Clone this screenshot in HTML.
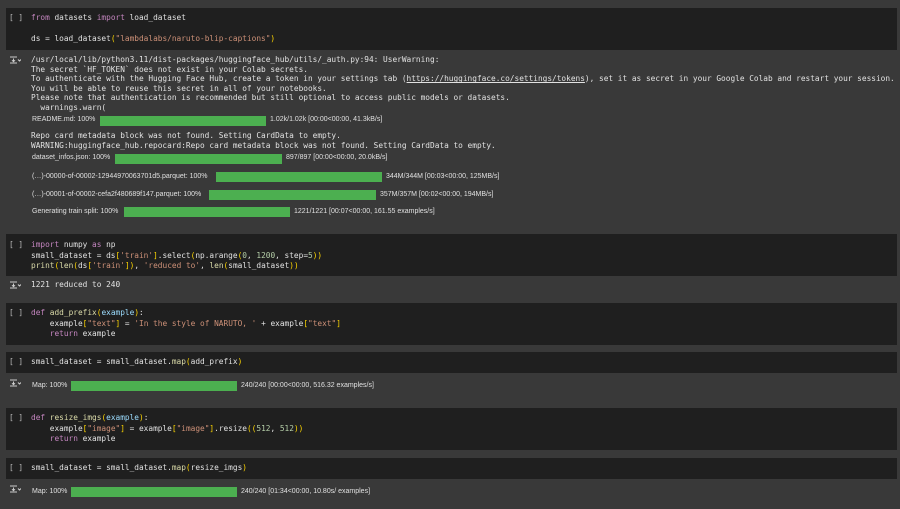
<!DOCTYPE html>
<html><head><style>
body{margin:0;width:900px;height:509px;background:#393939;overflow:hidden;position:relative;font-family:"DejaVu Sans Mono","Liberation Mono",monospace;font-size:7.8px;color:#e2e2e2}
.cell{position:absolute;left:6px;width:891px;background:#1f1f1f}
.l{position:absolute;left:31px;white-space:pre;line-height:10px;height:10px}
.br{position:absolute;left:9px;white-space:pre;line-height:10px;color:#bbb}
.ic{position:absolute;left:10px;width:11px;height:8px}
.p{position:absolute;font-family:"Liberation Sans",sans-serif;font-size:7px;color:#e0e0e0;white-space:pre;line-height:10px}
.bar{position:absolute;background:#4caf50;height:10px}
.k{color:#c586c0}.s{color:#ce9178}.f{color:#dcdcaa}.y{color:#ffd700}.v{color:#9cdcfe}.n{color:#b5cea8}
a{color:#e2e2e2;text-decoration:underline}
</style></head><body>
<svg width="0" height="0" style="position:absolute"><defs><g id="ic"><path d="M0 1h7M0 7h7M3.5 2.5v3M2 4.2l1.5 1.5 1.5-1.5M8 3.5l1.5 1.5 1.5-1.5" stroke="#ccc" stroke-width="1" fill="none"/></g></defs></svg>

<div class="cell" style="top:8px;height:42px"></div>
<div class="br" style="top:13px">[ ]</div>
<div class="l" style="top:13px"><span class="k">from</span> datasets <span class="k">import</span> load_dataset</div>
<div class="l" style="top:34px">ds = load_dataset<span class="y">(</span><span class="s">"lambdalabs/naruto-blip-captions"</span><span class="y">)</span></div>

<svg class="ic" style="top:56px"><use href="#ic"/></svg>
<div class="l" style="top:55px">/usr/local/lib/python3.11/dist-packages/huggingface_hub/utils/_auth.py:94: UserWarning:</div>
<div class="l" style="top:64.6px">The secret `HF_TOKEN` does not exist in your Colab secrets.</div>
<div class="l" style="top:74.2px">To authenticate with the Hugging Face Hub, create a token in your settings tab (<a>https://huggingface.co/settings/tokens</a>), set it as secret in your Google Colab and restart your session.</div>
<div class="l" style="top:83.8px">You will be able to reuse this secret in all of your notebooks.</div>
<div class="l" style="top:93.4px">Please note that authentication is recommended but still optional to access public models or datasets.</div>
<div class="l" style="top:103px">  warnings.warn(</div>
<div class="p" style="left:32px;top:115px">README.md: 100%</div><div class="bar" style="left:100px;top:116px;width:166px"></div><div class="p" style="left:270px;top:115px">1.02k/1.02k [00:00&lt;00:00, 41.3kB/s]</div>
<div class="l" style="top:131px">Repo card metadata block was not found. Setting CardData to empty.</div>
<div class="l" style="top:140.5px">WARNING:huggingface_hub.repocard:Repo card metadata block was not found. Setting CardData to empty.</div>
<div class="p" style="left:32px;top:153px">dataset_infos.json: 100%</div><div class="bar" style="left:115px;top:154px;width:167px"></div><div class="p" style="left:286px;top:153px">897/897 [00:00&lt;00:00, 20.0kB/s]</div>
<div class="p" style="left:32px;top:172px">(…)-00000-of-00002-12944970063701d5.parquet: 100%</div><div class="bar" style="left:216px;top:172px;width:166px"></div><div class="p" style="left:386px;top:172px">344M/344M [00:03&lt;00:00, 125MB/s]</div>
<div class="p" style="left:32px;top:190px">(…)-00001-of-00002-cefa2f480689f147.parquet: 100%</div><div class="bar" style="left:209px;top:190px;width:167px"></div><div class="p" style="left:380px;top:190px">357M/357M [00:02&lt;00:00, 194MB/s]</div>
<div class="p" style="left:32px;top:207px">Generating train split: 100%</div><div class="bar" style="left:124px;top:207px;width:166px"></div><div class="p" style="left:294px;top:207px">1221/1221 [00:07&lt;00:00, 161.55 examples/s]</div>

<div class="cell" style="top:234px;height:42px"></div>
<div class="br" style="top:240px">[ ]</div>
<div class="l" style="top:240px"><span class="k">import</span> numpy <span class="k">as</span> np</div>
<div class="l" style="top:250.5px">small_dataset = ds<span class="y">[</span><span class="s">'train'</span><span class="y">]</span>.select<span class="y">(</span>np.arange<span class="y">(</span><span class="n">0</span>, <span class="n">1200</span>, step=<span class="n">5</span><span class="y">))</span></div>
<div class="l" style="top:261px"><span class="f">print</span><span class="y">(</span><span class="f">len</span><span class="y">(</span>ds<span class="y">[</span><span class="s">'train'</span><span class="y">])</span>, <span class="s">'reduced to'</span>, <span class="f">len</span><span class="y">(</span>small_dataset<span class="y">))</span></div>
<svg class="ic" style="top:281px"><use href="#ic"/></svg>
<div class="l" style="top:280px">1221 reduced to 240</div>

<div class="cell" style="top:303px;height:42px"></div>
<div class="br" style="top:308px">[ ]</div>
<div class="l" style="top:308px"><span class="k">def</span> <span class="f">add_prefix</span><span class="y">(</span><span class="v">example</span><span class="y">)</span>:</div>
<div class="l" style="top:318.5px">    example<span class="y">[</span><span class="s">"text"</span><span class="y">]</span> = <span class="s">'In the style of NARUTO, '</span> + example<span class="y">[</span><span class="s">"text"</span><span class="y">]</span></div>
<div class="l" style="top:329px">    <span class="k">return</span> example</div>

<div class="cell" style="top:352px;height:21px"></div>
<div class="br" style="top:357px">[ ]</div>
<div class="l" style="top:357px">small_dataset = small_dataset.<span class="f">map</span><span class="y">(</span>add_prefix<span class="y">)</span></div>
<svg class="ic" style="top:379px"><use href="#ic"/></svg>
<div class="p" style="left:32px;top:381px">Map: 100%</div><div class="bar" style="left:71px;top:381px;width:166px"></div><div class="p" style="left:241px;top:381px">240/240 [00:00&lt;00:00, 516.32 examples/s]</div>

<div class="cell" style="top:408px;height:42px"></div>
<div class="br" style="top:413px">[ ]</div>
<div class="l" style="top:413px"><span class="k">def</span> <span class="f">resize_imgs</span><span class="y">(</span><span class="v">example</span><span class="y">)</span>:</div>
<div class="l" style="top:423.5px">    example<span class="y">[</span><span class="s">"image"</span><span class="y">]</span> = example<span class="y">[</span><span class="s">"image"</span><span class="y">]</span>.resize<span class="y">((</span><span class="n">512</span>, <span class="n">512</span><span class="y">))</span></div>
<div class="l" style="top:434px">    <span class="k">return</span> example</div>

<div class="cell" style="top:458px;height:21px"></div>
<div class="br" style="top:463px">[ ]</div>
<div class="l" style="top:463px">small_dataset = small_dataset.<span class="f">map</span><span class="y">(</span>resize_imgs<span class="y">)</span></div>
<svg class="ic" style="top:485px"><use href="#ic"/></svg>
<div class="p" style="left:32px;top:487px">Map: 100%</div><div class="bar" style="left:71px;top:487px;width:166px"></div><div class="p" style="left:241px;top:487px">240/240 [01:34&lt;00:00, 10.80s/ examples]</div>
</body></html>
